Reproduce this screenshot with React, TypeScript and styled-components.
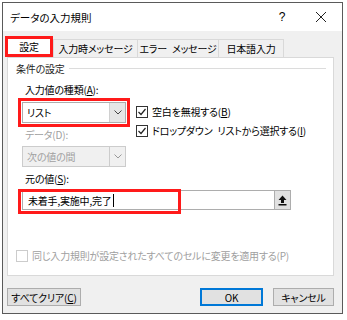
import styled, { createGlobalStyle } from "styled-components";

const GlobalStyle = createGlobalStyle`
  html, body {
    margin: 0;
    background: #ffffff;
  }
  body {
    font-family: "Noto Sans CJK JP", "Noto Sans", sans-serif;
    font-size: 10px;
    letter-spacing: -0.2px;
    word-spacing: 3px;
    color: #000;
    font-feature-settings: "palt";
  }
`;

const Dialog = styled.div`
  box-sizing: border-box;
  margin: 2px 0 0 2px;
  width: 341px;
  height: 312px;
  border: 1px solid #5a5a5a;
  background: #f0f0f0;
  display: flex;
  flex-direction: column;
`;

const TitleBar = styled.div`
  height: 28px;
  background: #fff;
  display: flex;
  align-items: center;
  padding-left: 7px;
`;

const Title = styled.div`
  flex: 1;
  font-size: 10.5px;
  letter-spacing: 0;
`;

const TitleButton = styled.div<{ $w: number }>`
  width: ${(p) => p.$w}px;
  display: flex;
  justify-content: center;
  align-items: center;
  font-size: 12px;
  font-family: "Liberation Sans", sans-serif;
`;

const Body = styled.div`
  flex: 1;
  display: flex;
  flex-direction: column;
  padding: 5px 8px 0 4px;
`;

const Tabs = styled.div`
  display: flex;
  align-items: flex-end;
  margin-left: -2px;
  height: 21px;
`;

const Tab = styled.div<{ $active?: boolean; $w: number }>`
  box-sizing: border-box;
  width: ${(p) => p.$w}px;
  height: ${(p) => (p.$active ? 21 : 18)}px;
  display: flex;
  align-items: center;
  justify-content: center;
  background: ${(p) => (p.$active ? "#fff" : "#f0f0f0")};
  border: ${(p) => (p.$active ? "3px solid #ff1a1a" : "1px solid #d9d9d9")};
  border-bottom: ${(p) => (p.$active ? "3px solid #ff1a1a" : "none")};
  margin-right: ${(p) => (p.$active ? 0 : -1)}px;
  position: relative;
  z-index: ${(p) => (p.$active ? 2 : 1)};
`;

const Panel = styled.div`
  box-sizing: border-box;
  width: 327px;
  height: 219px;
  background: #fff;
  border: 1px solid #d9d9d9;
  padding: 2px 7px 10px 8px;
  display: flex;
  flex-direction: column;
`;

const GroupHeader = styled.div`
  height: 16px;
  display: flex;
  align-items: center;
  gap: 4px;
  color: #1e1e1e;
`;

const GroupLine = styled.div`
  flex: 1;
  border-top: 1px solid #dcdcdc;
`;

const GroupBody = styled.div`
  margin-left: 6px;
  margin-top: 6px;
`;

const TopArea = styled.div`
  display: flex;
  gap: 10px;
`;

const LeftCol = styled.div`
  width: 104px;
  display: flex;
  flex-direction: column;
`;

const RightCol = styled.div`
  padding-top: 20px;
  display: flex;
  flex-direction: column;
`;

const Label = styled.div<{ $disabled?: boolean; $gap?: number }>`
  height: 16px;
  line-height: 16px;
  padding-left: 3px;
  margin-bottom: ${(p) => p.$gap ?? 0}px;
  color: ${(p) => (p.$disabled ? "#a0a0a0" : "#000")};
`;

const Combo = styled.div<{ $disabled?: boolean; $marked?: boolean }>`
  box-sizing: border-box;
  height: 21px;
  display: flex;
  margin-bottom: 4px;
  border: 1px solid ${(p) => (p.$disabled ? "#cccccc" : "#adadad")};
  background: ${(p) => (p.$disabled ? "#f0f0f0" : "#fff")};
  color: ${(p) => (p.$disabled ? "#a0a0a0" : "#000")};
  outline: ${(p) => (p.$marked ? "3px solid #ff1a1a" : "none")};
  outline-offset: 1px;
`;

const ComboText = styled.div`
  flex: 1;
  display: flex;
  align-items: center;
  padding-left: 4px;
`;

const ComboArrow = styled.div<{ $disabled?: boolean }>`
  width: 15px;
  display: flex;
  align-items: center;
  justify-content: center;
  background: ${(p) => (p.$disabled ? "#f0f0f0" : "#e6e6e6")};
  border-left: 1px solid ${(p) => (p.$disabled ? "#cccccc" : "#d0d0d0")};
`;

const CheckRow = styled.div<{ $disabled?: boolean }>`
  height: 19px;
  display: flex;
  align-items: center;
  gap: 4px;
  color: ${(p) => (p.$disabled ? "#a0a0a0" : "#000")};
`;

const Box = styled.div<{ $disabled?: boolean }>`
  box-sizing: border-box;
  width: 12px;
  height: 12px;
  border: 1px solid ${(p) => (p.$disabled ? "#cccccc" : "#333")};
  background: #fff;
  display: flex;
  align-items: center;
  justify-content: center;
`;

const InputRow = styled.div`
  box-sizing: border-box;
  margin-top: 3px;
  width: 269px;
  height: 20px;
  display: flex;
  border: 1px solid #adadad;
  background: #fff;
  position: relative;
`;

const InputText = styled.div`
  flex: 1;
  display: flex;
  align-items: center;
  padding-left: 5px;
`;

const Caret = styled.span`
  display: inline-block;
  width: 1px;
  height: 13px;
  background: #000;
  margin-left: 1px;
`;

const Mark = styled.div`
  position: absolute;
  left: -5px;
  top: -2px;
  width: 163px;
  height: 25px;
  box-sizing: border-box;
  border: 3px solid #ff1a1a;
  pointer-events: none;
`;

const PickButton = styled.div`
  width: 15px;
  background: #e1e1e1;
  border-left: 1px solid #adadad;
  display: flex;
  align-items: center;
  justify-content: center;
`;

const Bottom = styled.div`
  margin-top: auto;
`;

const Footer = styled.div`
  height: 37px;
  display: flex;
  align-items: flex-end;
  padding-bottom: 7px;
  box-sizing: border-box;
`;

const Button = styled.div<{ $w: number; $primary?: boolean }>`
  box-sizing: border-box;
  width: ${(p) => p.$w}px;
  height: 18px;
  display: flex;
  align-items: center;
  justify-content: center;
  background: #e1e1e1;
  border: 1px solid ${(p) => (p.$primary ? "#0078d7" : "#adadad")};
  box-shadow: ${(p) => (p.$primary ? "inset 0 0 0 1px #0078d7" : "none")};
`;

const Spacer = styled.div`
  flex: 1;
`;

const Gap = styled.div`
  width: 10px;
`;

const Chevron = ({ color }: { color: string }) => (
  <svg width="8" height="5" viewBox="0 0 8 5">
    <path d="M0.5 0.5 L4 4 L7.5 0.5" fill="none" stroke={color} strokeWidth="1" />
  </svg>
);

const Check = () => (
  <svg width="10" height="10" viewBox="0 0 10 10">
    <path d="M1.5 5 L4 7.5 L8.5 2" fill="none" stroke="#222" strokeWidth="1.2" />
  </svg>
);

function App() {
  return (
    <>
      <GlobalStyle />
      <Dialog>
        <TitleBar>
          <Title>データの入力規則</Title>
          <TitleButton $w={36}>?</TitleButton>
          <TitleButton $w={42}>
            <svg width="10" height="10" viewBox="0 0 10 10">
              <path d="M0 0 L10 10 M10 0 L0 10" stroke="#222" strokeWidth="1" />
            </svg>
          </TitleButton>
        </TitleBar>
        <Body>
          <Tabs>
            <Tab $active $w={48}>
              設定
            </Tab>
            <Tab $w={85}>入力時メッセージ</Tab>
            <Tab $w={82}>エラー メッセージ</Tab>
            <Tab $w={66}>日本語入力</Tab>
          </Tabs>
          <Panel>
            <GroupHeader>
              条件の設定
              <GroupLine />
            </GroupHeader>
            <GroupBody>
              <TopArea>
                <LeftCol>
                  <Label $gap={4}>
                    入力値の種類(<u>A</u>):
                  </Label>
                  <Combo $marked>
                    <ComboText>リスト</ComboText>
                    <ComboArrow>
                      <Chevron color="#444" />
                    </ComboArrow>
                  </Combo>
                  <Label $disabled $gap={3}>
                    データ(D):
                  </Label>
                  <Combo $disabled>
                    <ComboText>次の値の間</ComboText>
                    <ComboArrow $disabled>
                      <Chevron color="#999" />
                    </ComboArrow>
                  </Combo>
                </LeftCol>
                <RightCol>
                  <CheckRow>
                    <Box>
                      <Check />
                    </Box>
                    <span>
                      空白を無視する(<u>B</u>)
                    </span>
                  </CheckRow>
                  <CheckRow>
                    <Box>
                      <Check />
                    </Box>
                    <span>
                      ドロップダウン リストから選択する(<u>I</u>)
                    </span>
                  </CheckRow>
                </RightCol>
              </TopArea>
              <Label>
                元の値(<u>S</u>):
              </Label>
              <InputRow>
                <InputText>
                  未着手,実施中,完了
                  <Caret />
                </InputText>
                <PickButton>
                  <svg width="9" height="11" viewBox="0 0 9 11">
                    <path d="M4.5 0.5 L8.5 5 L6 5 L6 8 L3 8 L3 5 L0.5 5 Z" fill="#111" />
                    <rect x="0.5" y="9" width="8" height="1.5" fill="#111" />
                  </svg>
                </PickButton>
                <Mark />
              </InputRow>
            </GroupBody>
            <Bottom>
              <CheckRow $disabled>
                <Box $disabled />
                <span>同じ入力規則が設定されたすべてのセルに変更を適用する(P)</span>
              </CheckRow>
            </Bottom>
          </Panel>
          <Footer>
            <Button $w={74}>
              すべてクリア(<u>C</u>)
            </Button>
            <Spacer />
            <Button $w={63} $primary>
              OK
            </Button>
            <Gap />
            <Button $w={61}>キャンセル</Button>
          </Footer>
        </Body>
      </Dialog>
    </>
  );
}

export default App;
